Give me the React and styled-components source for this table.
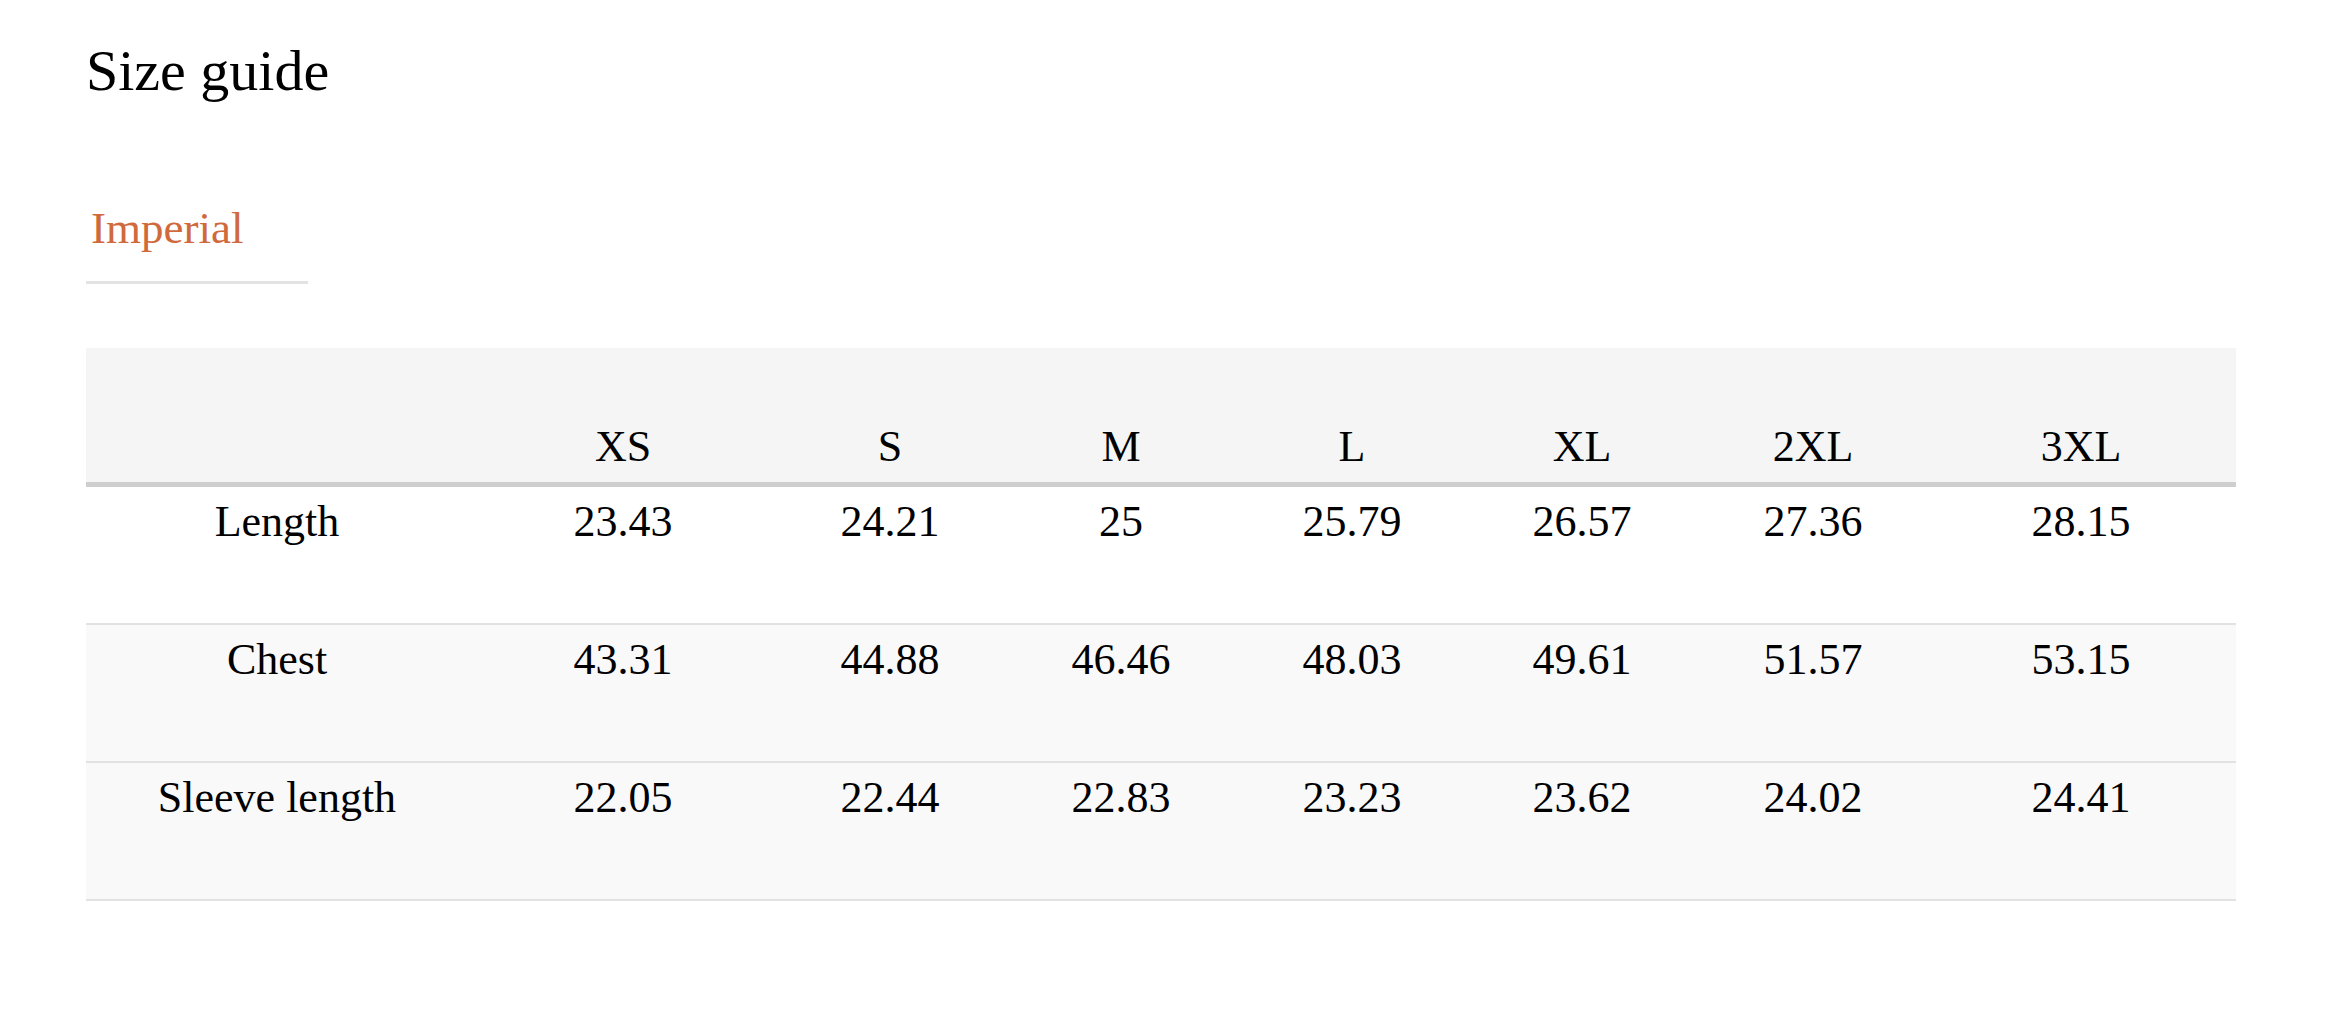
import React from "react";
import styled, { createGlobalStyle } from "styled-components";

const Global = createGlobalStyle`
  html, body {
    margin: 0;
    padding: 0;
    background: #ffffff;
  }
  body {
    font-family: "Liberation Serif", "Times New Roman", serif;
    color: #000;
  }
`;

const Page = styled.div`
  padding: 37px 96px 0 86px;
  box-sizing: border-box;
  width: 2333px;
  min-height: 1023px;
`;

const Title = styled.h1`
  margin: 0;
  font-size: 58px;
  font-weight: 400;
  line-height: normal;
  color: #000;
`;

const TabBar = styled.div`
  display: flex;
  margin-top: 98px;
`;

const Tab = styled.div`
  width: 222px;
  box-sizing: border-box;
  padding: 0 0 27px 5px;
  border-bottom: 3px solid #e3e3e3;
  font-size: 45px;
  line-height: normal;
  color: ${(p) => (p.$active ? "#d0693c" : "#333")};
`;

const Table = styled.table`
  margin-top: 64px;
  width: 2150px;
  border-collapse: separate;
  border-spacing: 0;
  table-layout: fixed;
  font-size: 44px;
  line-height: normal;
`;

const HeadCell = styled.th`
  font-weight: 400;
  text-align: center;
  vertical-align: bottom;
  background: #f5f5f5;
  padding: 73px 0 10px;
  border-bottom: 5px solid #cecece;
`;

const Row = styled.tr`
  background: ${(p) => (p.$shaded ? "#f9f9fa" : "#ffffff")};
`;

const Cell = styled.td`
  text-align: center;
  vertical-align: top;
  padding: 9px 0 76px;
  border-bottom: 2px solid #e2e2e4;
`;

const widths = [382, 310, 224, 238, 224, 236, 226, null];
const sizes = ["XS", "S", "M", "L", "XL", "2XL", "3XL"];
const rows = [
  { label: "Length", values: ["23.43", "24.21", "25", "25.79", "26.57", "27.36", "28.15"] },
  { label: "Chest", values: ["43.31", "44.88", "46.46", "48.03", "49.61", "51.57", "53.15"] },
  { label: "Sleeve length", values: ["22.05", "22.44", "22.83", "23.23", "23.62", "24.02", "24.41"] },
];

export default function App() {
  return (
    <>
      <Global />
      <Page>
        <Title>Size guide</Title>
        <TabBar>
          <Tab $active>Imperial</Tab>
        </TabBar>
        <Table>
          <colgroup>
            {widths.map((w, i) => (
              <col key={i} style={w ? { width: w } : undefined} />
            ))}
          </colgroup>
          <thead>
            <tr>
              <HeadCell />
              {sizes.map((s) => (
                <HeadCell key={s}>{s}</HeadCell>
              ))}
            </tr>
          </thead>
          <tbody>
            {rows.map((r, i) => (
              <Row key={r.label} $shaded={i > 0}>
                <Cell>{r.label}</Cell>
                {r.values.map((v, j) => (
                  <Cell key={j}>{v}</Cell>
                ))}
              </Row>
            ))}
          </tbody>
        </Table>
      </Page>
    </>
  );
}
